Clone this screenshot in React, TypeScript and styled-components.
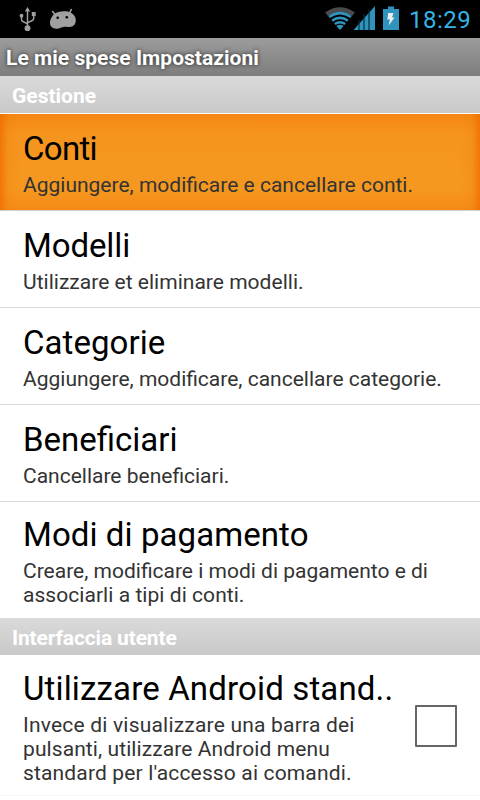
import React from "react";
import styled, { createGlobalStyle } from "styled-components";

const GlobalStyle = createGlobalStyle`
  * { box-sizing: border-box; }
  body { margin: 0; background: #fff; font-family: Roboto, sans-serif; overflow: hidden; }
`;

const Screen = styled.main`
  width: 480px;
  height: 800px;
  display: flex;
  flex-direction: column;
  background: #fff;
  overflow: hidden;
`;

const StatusBar = styled.header`
  height: 38px;
  flex: none;
  display: flex;
  align-items: center;
  justify-content: space-between;
  background: #000;
`;

const StatusGroup = styled.div`
  display: flex;
  height: 38px;
`;

const Clock = styled.span`
  width: 71px;
  font-size: 24px;
  line-height: 41px;
  letter-spacing: 0.5px;
  color: #33b5e5;
`;

const TitleBar = styled.h1<{ $spacing: number }>`
  height: 38px;
  flex: none;
  margin: 0;
  padding-left: 6px;
  background: linear-gradient(#9c9c9c, #7d7d7d);
  color: #fff;
  font-size: 21px;
  font-weight: 700;
  line-height: 41px;
  letter-spacing: ${(p) => p.$spacing}px;
  text-shadow: 0 0 4px #222;
`;

const SectionHeader = styled.h2<{ $spacing: number }>`
  height: 37px;
  flex: none;
  margin: 0;
  padding-left: 12px;
  background: linear-gradient(#dadada, #c9c9c9);
  color: #fff;
  font-size: 21px;
  font-weight: 700;
  line-height: 41px;
  letter-spacing: ${(p) => p.$spacing}px;
`;

const List = styled.ul`
  margin: 0;
  padding: 0;
  list-style: none;
`;

const Row = styled.li<{ $height: number; $top: number; $active?: boolean; $divider?: string }>`
  height: ${(p) => p.$height}px;
  padding: ${(p) => p.$top}px 23px 0;
  display: flex;
  border-bottom: ${(p) => (p.$divider ? `1px solid ${p.$divider}` : "none")};
  background: ${(p) =>
    p.$active
      ? `linear-gradient(90deg, rgba(240,110,0,.8), rgba(243,125,10,.25) 8px, transparent 20px, transparent 460px, rgba(243,125,10,.25) 472px, rgba(240,110,0,.8)),
         linear-gradient(#f58613, #f5951f 20px, #f59820 75px, #f58a17)`
      : "#fff"};
`;

const RowText = styled.div`
  flex: 1;
  min-width: 0;
`;

const RowTitle = styled.div<{ $spacing: number }>`
  height: 39px;
  font-size: 33px;
  line-height: 39px;
  white-space: nowrap;
  color: #000;
  letter-spacing: ${(p) => p.$spacing}px;
`;

const Summary = styled.div`
  margin-top: 5px;
  color: #333;
`;

const SummaryLine = styled.div<{ $spacing: number }>`
  font-size: 21px;
  line-height: 24px;
  white-space: nowrap;
  letter-spacing: ${(p) => p.$spacing}px;
`;

const Checkbox = styled.span`
  width: 42px;
  height: 42px;
  flex: none;
  margin-top: 36px;
  border: 2px solid #666;
  border-radius: 1px;
`;

const ListGap = styled.div`
  height: 1px;
  flex: none;
  background: #fff;
`;

type Line = [text: string, spacing: number];

interface Preference {
  title: Line;
  summary: Line[];
  height: number;
  top: number;
  divider?: string;
  active?: boolean;
  checkbox?: boolean;
}

const management: Preference[] = [
  { title: ["Conti", -0.7], summary: [["Aggiungere, modificare e cancellare conti.", 0]], height: 97, top: 15, divider: "#d3cfca", active: true },
  { title: ["Modelli", -0.1], summary: [["Utilizzare et eliminare modelli.", 0.02]], height: 97, top: 15, divider: "#d9d9d9" },
  { title: ["Categorie", 0.06], summary: [["Aggiungere, modificare, cancellare categorie.", 0]], height: 97, top: 15, divider: "#d9d9d9" },
  { title: ["Beneficiari", 0], summary: [["Cancellare beneficiari.", 0]], height: 97, top: 15, divider: "#d9d9d9" },
  { title: ["Modi di pagamento", 0.08], summary: [["Creare, modificare i modi di pagamento e di", 0], ["associarli a tipi di conti.", 0.05]], height: 116, top: 13 },
];

const interfacePrefs: Preference[] = [
  {
    title: ["Utilizzare Android stand..", 0.15],
    summary: [["Invece di visualizzare una barra dei", 0.2], ["pulsanti, utilizzare Android menu", 0.09], ["standard per l'accesso ai comandi.", 0.15]],
    height: 141,
    top: 14,
    divider: "#f5f5f5",
    checkbox: true,
  },
];

const PreferenceRow = ({ title, summary, height, top, divider, active, checkbox }: Preference) => (
  <Row $height={height} $top={top} $divider={divider} $active={active}>
    <RowText>
      <RowTitle $spacing={title[1]}>{title[0]}</RowTitle>
      <Summary>
        {summary.map(([text, spacing]) => (
          <SummaryLine key={text} $spacing={spacing}>{text}</SummaryLine>
        ))}
      </Summary>
    </RowText>
    {checkbox && <Checkbox role="checkbox" aria-checked={false} />}
  </Row>
);

const NotificationIcons = () => (
  <svg width="90" height="38" viewBox="0 0 90 38" fill="#a0a0a0">
    <g fill="none" stroke="#a0a0a0" strokeWidth="1.5">
      <path d="M27.5 10v18M21.5 16v3.5q0 1.5 1.5 2l4.5 2.3M33.7 15v3.5q0 1.5-1.5 2l-4.7 2.3" />
    </g>
    <path d="M27.5 7l2.7 4.5h-5.4zM31.8 12h3.9v4h-3.9z" />
    <circle cx="21.5" cy="15.7" r="1.9" />
    <circle cx="27.5" cy="28.2" r="2.9" />
    <path d="M54.5 13.8C58 10.8 67 10.5 71 12.7C75 14.8 76.5 19 75.6 22.2C74.7 26.2 70.5 27.7 66.5 26.8C63.5 26.3 61.8 27.2 59.5 28.2C55 29.7 50.3 27.8 50 23.5C49.8 20 52.2 15.5 54.5 13.8Z" />
    <path d="M52.7 11.6L55.3 15M71.3 9.6L69.5 13" stroke="#a0a0a0" strokeWidth="1.6" strokeLinecap="round" />
    <circle cx="57.7" cy="17.8" r="1.3" fill="#000" />
    <circle cx="66.8" cy="17.3" r="1.3" fill="#000" />
  </svg>
);

const SystemIcons = () => (
  <svg width="84" height="38" viewBox="325 0 84 38">
    <path d="M325 12.5Q340 1.8 355 12.5L352 16Q340 8 328 16Z" fill="#4a4a4a" />
    <g fill="none" stroke="#2f93bd" strokeWidth="2.6">
      <path d="M329 17Q340 9.3 351 17" />
      <path d="M332.2 20.6Q340 15.2 347.8 20.6" />
      <path d="M334.8 24Q340 20.4 345.2 24" />
    </g>
    <path d="M336.3 26Q340 23.5 343.7 26L340 30Z" fill="#2f93bd" />
    <path d="M353.5 30L375 6V30Z" fill="#2f93bd" />
    <path d="M359 20V30M364 14V30M369 9V30" stroke="#092b39" strokeWidth="1.2" />
    <path d="M383 9h5V6.5h6V9h5v21h-16z" fill="#2f93bd" />
    <path d="M388.2 13h5.3l-1.5 4.5h2.5l-5.8 8 1.2-6h-2.5z" fill="#eee" />
  </svg>
);

export default function App() {
  return (
    <>
      <GlobalStyle />
      <Screen>
        <StatusBar>
          <StatusGroup><NotificationIcons /></StatusGroup>
          <StatusGroup><SystemIcons /><Clock>18:29</Clock></StatusGroup>
        </StatusBar>
        <TitleBar $spacing={0.03}>Le mie spese Impostazioni</TitleBar>
        <SectionHeader $spacing={0}>Gestione</SectionHeader>
        <ListGap />
        <List>{management.map((p) => <PreferenceRow key={p.title[0]} {...p} />)}</List>
        <SectionHeader $spacing={-0.15}>Interfaccia utente</SectionHeader>
        <List>{interfacePrefs.map((p) => <PreferenceRow key={p.title[0]} {...p} />)}</List>
      </Screen>
    </>
  );
}
